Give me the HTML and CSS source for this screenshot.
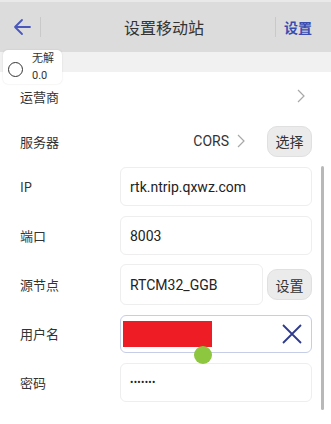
FILE: index.html
```html
<!DOCTYPE html>
<html lang="zh">
<head>
<meta charset="utf-8">
<link rel="stylesheet" href="styles.css">
</head>
<body>
<div class="screen">
  <header class="topbar">
    <div class="back">
      <svg width="22" height="22" viewBox="0 0 22 22"><path d="M19 11H4M11 4L4 11L11 18" fill="none" stroke="#4a58bd" stroke-width="1.8" stroke-linecap="round" stroke-linejoin="round"/></svg>
    </div>
    <div class="sep"></div>
    <div class="title">设置移动站</div>
    <div class="sep"></div>
    <div class="action">设置</div>
  </header>
  <div class="band"></div>
  <div class="form">
    <div class="row row-link">
      <span class="label">运营商</span>
      <span class="chev">
        <svg width="8" height="14" viewBox="0 0 8 14"><path d="M1 1L7 7L1 13" fill="none" stroke="#a8a8a8" stroke-width="1.2"/></svg>
      </span>
    </div>
    <div class="row row-server">
      <span class="label">服务器</span>
      <span class="value">CORS
        <svg width="8" height="14" viewBox="0 0 8 14"><path d="M1 1L7 7L1 13" fill="none" stroke="#a8a8a8" stroke-width="1.2"/></svg>
      </span>
      <span class="btn">选择</span>
    </div>
    <div class="row">
      <span class="label">IP</span>
      <div class="field">rtk.ntrip.qxwz.com</div>
    </div>
    <div class="row">
      <span class="label">端口</span>
      <div class="field">8003</div>
    </div>
    <div class="row">
      <span class="label">源节点</span>
      <div class="field short">RTCM32_GGB</div>
      <span class="btn">设置</span>
    </div>
    <div class="row">
      <span class="label">用户名</span>
      <div class="field focus">
        <span class="redact"></span>
        <svg class="clear" width="22" height="22" viewBox="0 0 22 22"><path d="M2 2L20 20M20 2L2 20" stroke="#2d3a8e" stroke-width="1.8"/></svg>
      </div>
    </div>
    <div class="row">
      <span class="label">密码</span>
      <div class="field pw">•••••••</div>
    </div>
  </div>
  <div class="badge">
    <span class="ring"></span>
    <div class="badge-text"><span>无解</span><span>0.0</span></div>
  </div>
  <span class="dot"></span>
  <span class="scroll"></span>
</div>
</body>
</html>
```
FILE: styles.css
```css
* { box-sizing: border-box; }
html, body { margin: 0; padding: 0; background: #fff; }
body {
  font-family: Roboto, "Noto Sans CJK SC", sans-serif;
  color: #333;
}
.screen {
  position: relative;
  width: 331px;
  height: 424px;
  overflow: hidden;
  background: #fff;
}
.topbar {
  height: 52px;
  background: #dcdcdc;
  display: flex;
  align-items: center;
  border-top: 2px solid #e9e9e9;
}
.back {
  width: 40px;
  display: flex;
  justify-content: center;
  padding-left: 4px;
}
.sep {
  width: 1px;
  height: 20px;
  background: #c9c9c9;
}
.title {
  flex: 1;
  text-align: center;
  padding-left: 12px;
  font-size: 16px;
  color: #333;
  font-family: "Noto Sans CJK SC", sans-serif;
}
.action {
  width: 55px;
  padding-left: 8px;
  font-size: 14px;
  font-weight: 600;
  color: #3a4cb2;
  font-family: "Noto Sans CJK SC", sans-serif;
}
.band {
  height: 20px;
  background: #f1f1f1;
}
.form {
  padding: 0 19px 0 20px;
}
.row {
  height: 49px;
  display: flex;
  align-items: center;
}
.row-link { height: 48px; justify-content: space-between; }
.row-server { height: 42px; }
.label {
  width: 100px;
  font-size: 13px;
  font-family: "Noto Sans CJK SC", sans-serif;
  color: #333;
}
.chev { padding-right: 7px; display: flex; }
.value {
  flex: 1;
  display: flex;
  align-items: center;
  justify-content: flex-end;
  gap: 8px;
  font-size: 14px;
  padding-right: 22px;
}
.btn {
  width: 45px;
  height: 31px;
  border-radius: 10px;
  background: #ebebeb;
  border: 1px solid #e0e0e0;
  display: flex;
  align-items: center;
  justify-content: center;
  font-size: 14px;
  font-family: "Noto Sans CJK SC", sans-serif;
  color: #333;
}
.field {
  flex: 1;
  height: 39px;
  border: 1px solid #eeeeee;
  border-radius: 6px;
  background: #fff;
  display: flex;
  align-items: center;
  padding-left: 9px;
  font-size: 14px;
  color: #222;
}
.field.short { margin-right: 4px; height: 41px; }
.field.focus {
  border-color: #c6cde6;
  padding-left: 2px;
  padding-right: 8px;
  justify-content: space-between;
  height: 38px;
}
.redact {
  width: 89px;
  height: 26px;
  background: #ee1c24;
}
.field.pw { font-size: 10px; letter-spacing: 0.3px; }
.badge {
  position: absolute;
  left: 3px;
  top: 50px;
  width: 59px;
  height: 34px;
  background: #fff;
  border-radius: 5px;
  box-shadow: 0 0 2px rgba(0,0,0,0.12);
  display: flex;
  align-items: flex-start;
  padding-left: 5px;
  gap: 9px;
}
.ring {
  width: 15px;
  height: 15px;
  border: 1.5px solid #333;
  border-radius: 50%;
  margin-top: 12px;
}
.badge-text {
  display: flex;
  flex-direction: column;
  font-size: 11px;
  line-height: 17px;
  font-family: Roboto, "Noto Sans CJK SC", sans-serif;
}
.dot {
  position: absolute;
  left: 194px;
  top: 346px;
  width: 18px;
  height: 18px;
  border-radius: 50%;
  background: #8dc63f;
}
.scroll {
  position: absolute;
  left: 321px;
  top: 166px;
  width: 3px;
  height: 244px;
  background: #b8b8b8;
  border-radius: 2px;
}
```
